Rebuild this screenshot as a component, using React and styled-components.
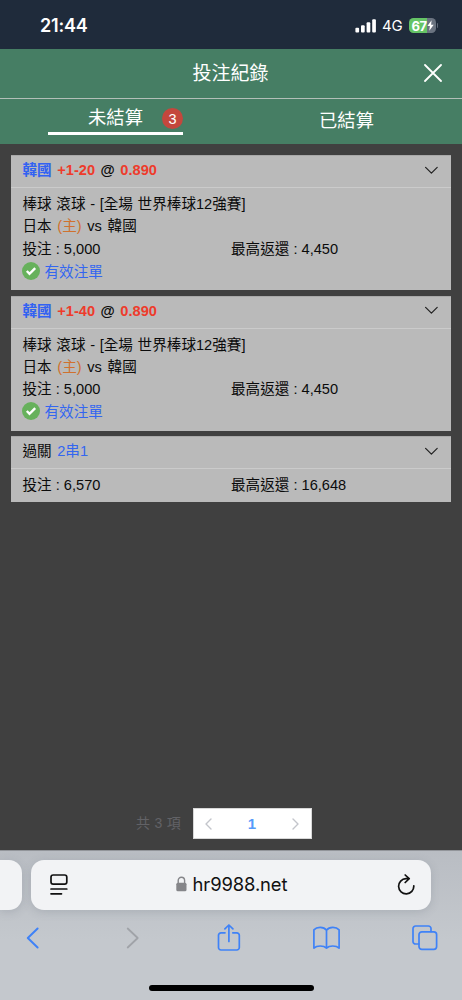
import React from "react";
import styled, { createGlobalStyle } from "styled-components";

const GlobalStyle = createGlobalStyle`
  * {
    box-sizing: border-box;
  }
  body {
    margin: 0;
    background-color: #404040;
    font-family: "Liberation Sans", "Noto Sans CJK TC", sans-serif;
  }
`;

const Screen = styled.div`
  width: 462px;
  height: 1000px;
  display: flex;
  flex-direction: column;
  background-color: #404040;
  overflow: hidden;
`;

const StatusBar = styled.div`
  height: 49px;
  padding: 2px 24px 0 40px;
  display: flex;
  justify-content: space-between;
  align-items: center;
  background-color: #1f2b3b;
  color: #ffffff;
  font-family: Inter, sans-serif;
`;

const Clock = styled.span`
  font-size: 18px;
  font-weight: 600;
  letter-spacing: -0.2px;
`;

const StatusIcons = styled.div`
  display: flex;
  align-items: center;
`;

const Network = styled.span`
  margin: 0 6px 0 6px;
  font-size: 15px;
  letter-spacing: -0.2px;
`;

const Battery = styled.div`
  width: 27px;
  height: 15px;
  border-radius: 4.5px;
  display: flex;
  align-items: center;
  padding-left: 3px;
  background: linear-gradient(to right, #65c466 67%, #6a7380 67%);
  font-size: 13px;
  font-weight: 700;
  letter-spacing: -0.5px;
`;

const BatteryTip = styled.div`
  width: 1.5px;
  height: 5px;
  margin-left: 1px;
  border-radius: 0 2px 2px 0;
  background-color: #5d6876;
`;

const TitleBar = styled.header`
  height: 50px;
  padding: 0 20px 0 38px;
  display: grid;
  grid-template-columns: 1fr auto 1fr;
  align-items: center;
  background-color: #467e64;
  border-bottom: 1px solid #b3bfb8;
  color: #ffffff;
`;

const Title = styled.h1`
  grid-column: 2;
  margin: 0 0 0 -19px;
  font-size: 19px;
  font-weight: 400;
  line-height: 28px;
`;

const CloseButton = styled.button`
  justify-self: end;
  display: flex;
  padding: 0 0 2px;
  border: none;
  background: none;
`;

const Tabs = styled.nav`
  height: 45px;
  display: grid;
  grid-template-columns: 1fr 1fr;
  background-color: #467e64;
`;

const Tab = styled.div`
  display: flex;
  justify-content: center;
  align-items: ${(props) => (props.$active ? "flex-start" : "center")};
  padding-bottom: ${(props) => (props.$active ? 0 : "5px")};
  color: #ffffff;
  font-size: 18.3px;
`;

const TabLabel = styled.div`
  width: 135px;
  height: 36px;
  display: grid;
  grid-template-columns: 1fr auto 1fr;
  align-items: center;
  padding-top: 1px;
  border-bottom: 3.5px solid #ffffff;
`;

const TabText = styled.span`
  grid-column: 2;
`;

const Badge = styled.span`
  justify-self: end;
  width: 21px;
  height: 21px;
  margin-top: 5px;
  border-radius: 50%;
  display: flex;
  justify-content: center;
  align-items: center;
  background-color: #c4473d;
  font-size: 14.5px;
`;

const BetList = styled.main`
  flex: 1;
  padding: 11px 11px 0;
  display: flex;
  flex-direction: column;
  gap: 5.6px;
`;

const Card = styled.section`
  background-color: #bababa;
  border-top: 1px solid #a9a9a9;
  color: #0b0b0b;
  font-size: 14.6px;
`;

const CardHeader = styled.div`
  height: 32px;
  padding: 0 12px 6px 11.5px;
  display: flex;
  justify-content: space-between;
  align-items: center;
  border-bottom: 1px solid #cbcbcb;
  font-weight: ${(props) => (props.$bold ? 700 : 400)};
  word-spacing: 1.5px;
`;

const CardBody = styled.div`
  padding: ${(props) => (props.$compact ? "3px 11.5px 7.6px" : "3.3px 11.5px 6.8px")};
`;

const Row = styled.div`
  height: 22.4px;
  display: flex;
  align-items: center;
  white-space: pre;
  word-spacing: ${(props) => props.$spacing || "0"};
`;

const StatusRow = styled(Row)`
  height: 24.7px;
  margin-left: -1px;
`;

const HalfCell = styled.span`
  width: 50%;
`;

const Colored = styled.span`
  color: ${(props) => props.$color};
`;

const Valid = styled.span`
  margin-left: 5px;
  padding-bottom: 1px;
  color: #3366f0;
`;

const Pagination = styled.footer`
  height: 42px;
  padding-left: 136px;
  display: flex;
  align-items: flex-start;
`;

const Total = styled.span`
  width: 57px;
  line-height: 31px;
  color: #626266;
  font-size: 14px;
  letter-spacing: 0.3px;
`;

const Pager = styled.div`
  width: 119px;
  height: 31px;
  padding: 0 12px 0 11px;
  display: flex;
  justify-content: space-between;
  align-items: center;
  background-color: #ffffff;
  border: 1px solid #d8d8d8;
  color: #559bfa;
  font-size: 15px;
  font-weight: 700;
`;

const Browser = styled.div`
  height: 150px;
  flex-shrink: 0;
  background: linear-gradient(#b9bdc3, #c4c8cd 60%);
  border-top: 1px solid #92959a;
`;

const AddressRow = styled.div`
  height: 59px;
  padding-top: 9px;
  display: flex;
  gap: 9px;
`;

const PreviousTab = styled.div`
  width: 22px;
  height: 50px;
  border-radius: 0 13px 13px 0;
  background-color: #f2f3f5;
  box-shadow: 0 2px 10px rgba(80, 90, 105, 0.2);
`;

const AddressBar = styled.div`
  width: 400px;
  height: 50px;
  padding: 0 16px 2px 19px;
  display: flex;
  justify-content: space-between;
  align-items: center;
  border-radius: 13px;
  background-color: #f2f3f5;
  box-shadow: 0 2px 10px rgba(80, 90, 105, 0.2);
`;

const Address = styled.div`
  display: flex;
  align-items: center;
  gap: 6px;
  margin-left: -2px;
  color: #111111;
  font-family: Inter, sans-serif;
  font-size: 18.4px;
  letter-spacing: -0.1px;
`;

const Toolbar = styled.div`
  height: 56px;
  padding: 0 23px 0 19px;
  display: flex;
  justify-content: space-between;
  align-items: center;
`;

const ToolButton = styled.button`
  width: 28px;
  height: 28px;
  padding: 0;
  display: flex;
  justify-content: center;
  align-items: center;
  border: none;
  background: none;
`;

const HomeIndicator = styled.div`
  width: 165px;
  height: 6px;
  margin: 19px auto 0;
  border-radius: 3px;
  background-color: #000000;
`;

const Stroke = styled.svg`
  display: block;
  flex-shrink: 0;
  fill: none;
  stroke: ${(props) => props.$color || "#3f82f7"};
  stroke-width: ${(props) => props.$weight || 1.7};
  stroke-linecap: round;
  stroke-linejoin: round;
`;

const ChevronStroke = styled(Stroke)`
  margin-top: 3px;
`;

const bets = [
  { id: 1, odds: "+1-20", price: "0.890" },
  { id: 2, odds: "+1-40", price: "0.890" },
];

function Signal() {
  return (
    <svg width="21" height="14" viewBox="0 0 21 14" fill="#fff">
      <rect x="0.4" y="8.8" width="3.7" height="4.7" rx="1" />
      <rect x="6" y="6.3" width="3.7" height="7.2" rx="1" />
      <rect x="11.6" y="3.3" width="3.7" height="10.2" rx="1" />
      <rect x="17.2" y="0.3" width="3.7" height="13.2" rx="1" />
    </svg>
  );
}

function Bolt() {
  return (
    <svg width="7" height="11" viewBox="0 0 7 11" fill="#fff">
      <path d="M4.6 0.3 0.4 6h2.5L2.3 10.7 6.7 4.8H4.1z" />
    </svg>
  );
}

function Chevron() {
  return (
    <ChevronStroke width="14" height="9" viewBox="0 0 14 9" $color="#222" $weight={1.2}>
      <path d="M0.6 1.3 6.4 7.1l5.8-5.8" />
    </ChevronStroke>
  );
}

function ValidIcon() {
  return (
    <svg width="18" height="18" viewBox="0 0 18 18">
      <circle cx="9" cy="9" r="9" fill="#67b15c" />
      <path d="m4.8 9 2.7 2.8 5.7-5.6" fill="none" stroke="#fff" strokeWidth="2.4" />
    </svg>
  );
}

function Amounts({ stake, payout }) {
  return (
    <Row>
      <HalfCell>投注 : {stake}</HalfCell>
      <HalfCell>最高返還 : {payout}</HalfCell>
    </Row>
  );
}

function BetCard({ bet }) {
  return (
    <Card>
      <CardHeader $bold>
        <span>
          <Colored $color="#3262f2">韓國</Colored>{" "}
          <Colored $color="#ee3b2b">{bet.odds}</Colored> @{" "}
          <Colored $color="#ee3b2b">{bet.price}</Colored>
        </span>
        <Chevron />
      </CardHeader>
      <CardBody>
        <Row $spacing="0.6px">棒球 滾球 - [全場 世界棒球12強賽]</Row>
        <Row $spacing="1.6px">
          日本 <Colored $color="#d0712e">(主)</Colored> vs 韓國
        </Row>
        <Amounts stake="5,000" payout="4,450" />
        <StatusRow>
          <ValidIcon />
          <Valid>有效注單</Valid>
        </StatusRow>
      </CardBody>
    </Card>
  );
}

export default function App() {
  return (
    <>
      <GlobalStyle />
      <Screen>
        <StatusBar>
          <Clock>21:44</Clock>
          <StatusIcons>
            <Signal />
            <Network>4G</Network>
            <Battery>
              67
              <Bolt />
            </Battery>
            <BatteryTip />
          </StatusIcons>
        </StatusBar>
        <TitleBar>
          <Title>投注紀錄</Title>
          <CloseButton aria-label="關閉">
            <Stroke width="18" height="18" viewBox="0 0 18 18" $color="#fff" $weight={1.8}>
              <path d="m1 1 16 16M17 1 1 17" />
            </Stroke>
          </CloseButton>
        </TitleBar>
        <Tabs>
          <Tab $active>
            <TabLabel>
              <TabText>未結算</TabText>
              <Badge>3</Badge>
            </TabLabel>
          </Tab>
          <Tab>已結算</Tab>
        </Tabs>
        <BetList>
          {bets.map((bet) => (
            <BetCard key={bet.id} bet={bet} />
          ))}
          <Card>
            <CardHeader>
              <span>
                過關 <Colored $color="#3366f0">2串1</Colored>
              </span>
              <Chevron />
            </CardHeader>
            <CardBody $compact>
              <Amounts stake="6,570" payout="16,648" />
            </CardBody>
          </Card>
        </BetList>
        <Pagination>
          <Total>共 3 項</Total>
          <Pager>
            <Stroke width="7" height="12" viewBox="0 0 7 12" $color="#c3c5cb" $weight={1.4}>
              <path d="M6 1 1 6l5 5" />
            </Stroke>
            <span>1</span>
            <Stroke width="7" height="12" viewBox="0 0 7 12" $color="#c3c5cb" $weight={1.4}>
              <path d="m1 1 5 5-5 5" />
            </Stroke>
          </Pager>
        </Pagination>
        <Browser>
          <AddressRow>
            <PreviousTab />
            <AddressBar>
              <Stroke width="18" height="21" viewBox="0 0 18 21" $color="#111">
                <rect x="1" y="1" width="15.8" height="9.2" rx="2.2" />
                <path d="M1 15h15.8M1 19.8h10.5" />
              </Stroke>
              <Address>
                <svg width="11" height="16" viewBox="0 0 11 16">
                  <rect x="0.3" y="6.8" width="10.2" height="8.5" rx="1.5" fill="#858589" />
                  <path d="M2.2 7V4.4a3.2 3.2 0 0 1 6.4 0V7" fill="none" stroke="#858589" strokeWidth="1.4" />
                </svg>
                hr9988.net
              </Address>
              <Stroke width="18" height="21" viewBox="0 0 18 21" $color="#111">
                <path d="M12 4.7H9a7.6 7.6 0 1 0 7.8 7.2M8.2 1l4 3.7-4 3.8" />
              </Stroke>
            </AddressBar>
          </AddressRow>
          <Toolbar>
            <ToolButton aria-label="上一頁">
              <Stroke width="14" height="22" viewBox="0.7 0 14 22" $weight={2}>
                <path d="M12.3 1.5 2.5 11l9.8 9.5" />
              </Stroke>
            </ToolButton>
            <ToolButton aria-label="下一頁">
              <Stroke width="16" height="22" viewBox="-2.7 0 16 22" $color="#a0a3a8" $weight={1.8}>
                <path d="m2 1.5 10 9.5L2 20.5" />
              </Stroke>
            </ToolButton>
            <ToolButton aria-label="分享">
              <Stroke width="24" height="28" viewBox="0 0 24 28">
                <path d="M8 8.8H4a2.5 2.5 0 0 0-2.5 2.5v12.2A2.5 2.5 0 0 0 4 26h15.8a2.5 2.5 0 0 0 2.5-2.5V11.3a2.5 2.5 0 0 0-2.5-2.5h-4M11.9 17.5V1M7.9 4.8l4-3.8 4 3.8" />
              </Stroke>
            </ToolButton>
            <ToolButton aria-label="書籤">
              <Stroke width="28" height="24" viewBox="0.5 0 28 24">
                <path d="M14 4.2c-2.8-3.6-9.6-3.6-12.6-.3v18.2c3-2.8 9.8-2.8 12.6 0 2.8-2.8 9.6-2.8 12.6 0V3.9c-3-3.3-9.8-3.3-12.6.3zM14 4.2v17.9" />
              </Stroke>
            </ToolButton>
            <ToolButton aria-label="分頁">
              <Stroke width="26" height="26" viewBox="0 0 26 26">
                <path d="M6.7 19H3.8A2.6 2.6 0 0 1 1 16.4V3.8A2.6 2.6 0 0 1 3.6 1h12.8A2.6 2.6 0 0 1 19 3.6v2.8" />
                <rect x="7" y="6.8" width="17.6" height="17.6" rx="2.8" />
              </Stroke>
            </ToolButton>
          </Toolbar>
          <HomeIndicator />
        </Browser>
      </Screen>
    </>
  );
}
